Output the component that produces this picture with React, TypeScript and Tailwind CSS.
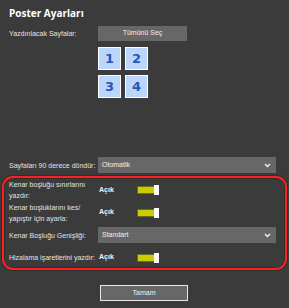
import { useState } from 'react';

const Chevron = () => (
  <svg width="7" height="5" viewBox="0 0 7 5" className="shrink-0">
    <polyline points="1,1 3.5,3.5 6,1" fill="none" stroke="#f2f2f2" strokeWidth="1.4" />
  </svg>
);

const Select = ({ value }: { value: string }) => (
  <div className="w-[178px] h-4 bg-[#676767] flex items-center justify-between pl-[4px] pr-[5px] text-[7px] text-[#f0f0f0]">
    <span>{value}</span>
    <Chevron />
  </div>
);

const Toggle = ({ on }: { on: boolean }) => (
  <div className="relative w-[22px] h-[10px] flex items-center">
    <div className={`w-[19px] h-[8px] border border-[#6b6b20] ${on ? 'bg-[#cccc00]' : 'bg-[#555]'}`} />
    <div className="absolute right-0 top-0 w-[5px] h-[10px] bg-white" />
  </div>
);

const Label = ({ children }: { children: React.ReactNode }) => (
  <div className="w-[89px] shrink-0 whitespace-nowrap text-[7px] leading-[11px] text-[#e4e4e4]">{children}</div>
);

export default function App() {
  const [pages] = useState(['1', '2', '3', '4']);

  return (
    <div className="w-[289px] h-[308px] bg-[#3b3b3b] font-['Liberation_Sans',sans-serif] overflow-hidden">
      <div className="pl-[9px] pt-[7px] text-[10px] leading-[12px] font-bold text-white font-['Open_Sans',sans-serif]">
        Poster Ayarları
      </div>

      <div className="flex items-center pl-[9px] mt-[7px]">
        <Label>Yazdırılacak Sayfalar:</Label>
        <div className="w-[89px] h-[15px] bg-[#676767] flex items-center justify-center text-[7px] text-[#f0f0f0]">
          Tümünü Seç
        </div>
      </div>

      <div className="ml-[98px] mt-[6px] grid grid-cols-[23px_23px] gap-[4px] gap-y-[5px]">
        {pages.map(p => (
          <div
            key={p}
            className="w-[23px] h-[23px] bg-[#bcd6fb] border border-white flex items-center justify-center text-[13px] font-bold text-[#2259b8] font-['DejaVu_Sans',sans-serif]"
          >
            {p}
          </div>
        ))}
      </div>

      <div className="flex items-center pl-[9px] mt-[59px]">
        <Label>Sayfaları 90 derece döndür:</Label>
        <Select value="Otomatik" />
      </div>

      <div className="mx-[2px] mt-[3px] h-[94px] border-2 border-[#ff1f1f] rounded-[11px] shadow-[0_0_0_1px_#2e2e2e,inset_0_0_0_1px_#2e2e2e] pl-[5px] pt-[1px]">
        <div className="flex items-center h-[22px]">
          <Label>
            Kenar boşluğu sınırlarını
            <br />
            yazdır:
          </Label>
          <div className="w-[39px] pl-[1px] text-[7px] font-bold text-[#f4f4f4]">Açık</div>
          <Toggle on />
        </div>
        <div className="flex items-center h-[23px]">
          <Label>
            Kenar boşluklarını kes/
            <br />
            yapıştır için ayarla:
          </Label>
          <div className="w-[39px] pl-[1px] text-[7px] font-bold text-[#f4f4f4]">Açık</div>
          <Toggle on />
        </div>
        <div className="flex items-center mt-[3px]">
          <Label>Kenar Boşluğu Genişliği:</Label>
          <Select value="Standart" />
        </div>
        <div className="flex items-center h-[11px] mt-[9px]">
          <Label>Hizalama işaretlerini yazdır:</Label>
          <div className="w-[39px] pl-[1px] text-[7px] font-bold text-[#f4f4f4]">Açık</div>
          <Toggle on />
        </div>
      </div>

      <div className="mt-[15px] ml-[100px] w-[88px] h-[16px] bg-[#676767] border border-[#e8e8e8] flex items-center justify-center text-[7px] text-[#f0f0f0]">
        Tamam
      </div>
    </div>
  );
}
